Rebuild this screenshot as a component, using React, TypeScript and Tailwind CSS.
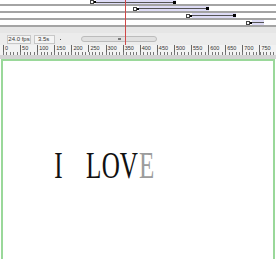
const layers = [
  { start: 90, end: 175, h: 'h-[6px]' },
  { start: 133, end: 217, h: 'h-[7px]' },
  { start: 186, end: 271, h: 'h-[7px]' },
  { start: 246, end: 0, h: 'h-[7px]' },
]

const marks = ['0', '50', '100', '150', '200', '250', '300', '350', '400', '450', '500', '550', '600', '650', '700', '750']

function Layer({ start, end, h }: { start: number; end: number; h: string }) {
  return (
    <div className={`${h} flex items-stretch bg-white border-b-2 border-b-[#a4a4a4]`}>
      <div className="shrink-0" style={{ width: start }} />
      {/* start keyframe */}
      <div className="shrink-0 flex items-center">
        <div className="w-[4px] h-[4px] border border-[#444] bg-white" />
        <div className="w-[2px] h-[2px] bg-black" />
      </div>
      <div className="relative flex-1 flex items-center bg-[#dedcf6]" style={end ? { maxWidth: end - start - 8 } : undefined}>
        <div className="h-px w-full bg-[#555]" />
      </div>
      {end ? (
        <div className="shrink-0 flex items-center bg-[#dedcf6]">
          <div className="w-[3px] h-[3px] bg-black" />
        </div>
      ) : null}
      <div className="flex-1" />
    </div>
  )
}

function Glyph({ c, gray }: { c: string; gray?: boolean }) {
  return (
    <span className="inline-flex w-[17.7px] justify-center">
      <span className={`inline-block shrink-0 scale-x-[0.66] ${gray ? 'text-[#9c9c9c]' : 'text-[#111]'}`}>{c}</span>
    </span>
  )
}

export default function App() {
  return (
    <div className="relative w-[276px] h-[261px] overflow-hidden bg-white font-['Liberation_Sans',sans-serif]">
      {/* layers */}
      <div>
        {layers.map((l, i) => (
          <Layer key={i} {...l} />
        ))}
      </div>
      <div className="h-[6px] bg-[#e6e6e6]" />

      {/* control bar */}
      <div className="h-[12px] flex items-center bg-[#ececec] text-[6px] text-[#333]">
        <div className="ml-[7px] w-[24px] h-[9px] border border-[#c8c8c8] bg-[#f4f4f4] flex items-center justify-center">24.0 fps</div>
        <div className="ml-[3px] w-[21px] h-[9px] border border-[#c8c8c8] bg-[#f4f4f4] flex items-center pl-[3px]">3.5s</div>
        <div className="ml-[5px] w-px h-px bg-[#555]" />
        <div className="ml-[20px] w-[76px] h-[6px] rounded-full border border-[#bcbcbc] bg-[#e0e0e0] flex items-center justify-center">
          <div className="w-[3px] h-[2px] bg-[#777]" />
        </div>
      </div>

      {/* ruler */}
      <div className="h-[10px] bg-[#f2f2f2] flex flex-col">
        <div className="flex pl-[3px] text-[5.5px] leading-[7px] text-[#333]">
          {marks.map((m) => (
            <div key={m} className="w-[17.1px] shrink-0 border-l border-l-[#666] pl-px">{m}</div>
          ))}
        </div>
        <div className="h-[3px] ml-[3px] bg-[repeating-linear-gradient(90deg,#777_0,#777_1px,transparent_1px,transparent_3.42px)]" />
      </div>
      <div className="h-[4px] bg-[#d2d2d2]" />

      {/* stage */}
      <div className="h-[200px] mx-[1px] border-2 border-b-0 border-[#9ad89a] bg-white">
        <div className="mt-[85px] pl-[46px] text-[38px] leading-none font-['Liberation_Serif',serif] flex">
          <Glyph c="I" />
          <Glyph c=" " />
          <Glyph c="L" />
          <Glyph c="O" />
          <Glyph c="V" />
          <Glyph c="E" gray />
        </div>
      </div>

      {/* playhead */}
      <div className="absolute left-[125px] top-0 w-px h-[45px] bg-[#d04848]" />
    </div>
  )
}
